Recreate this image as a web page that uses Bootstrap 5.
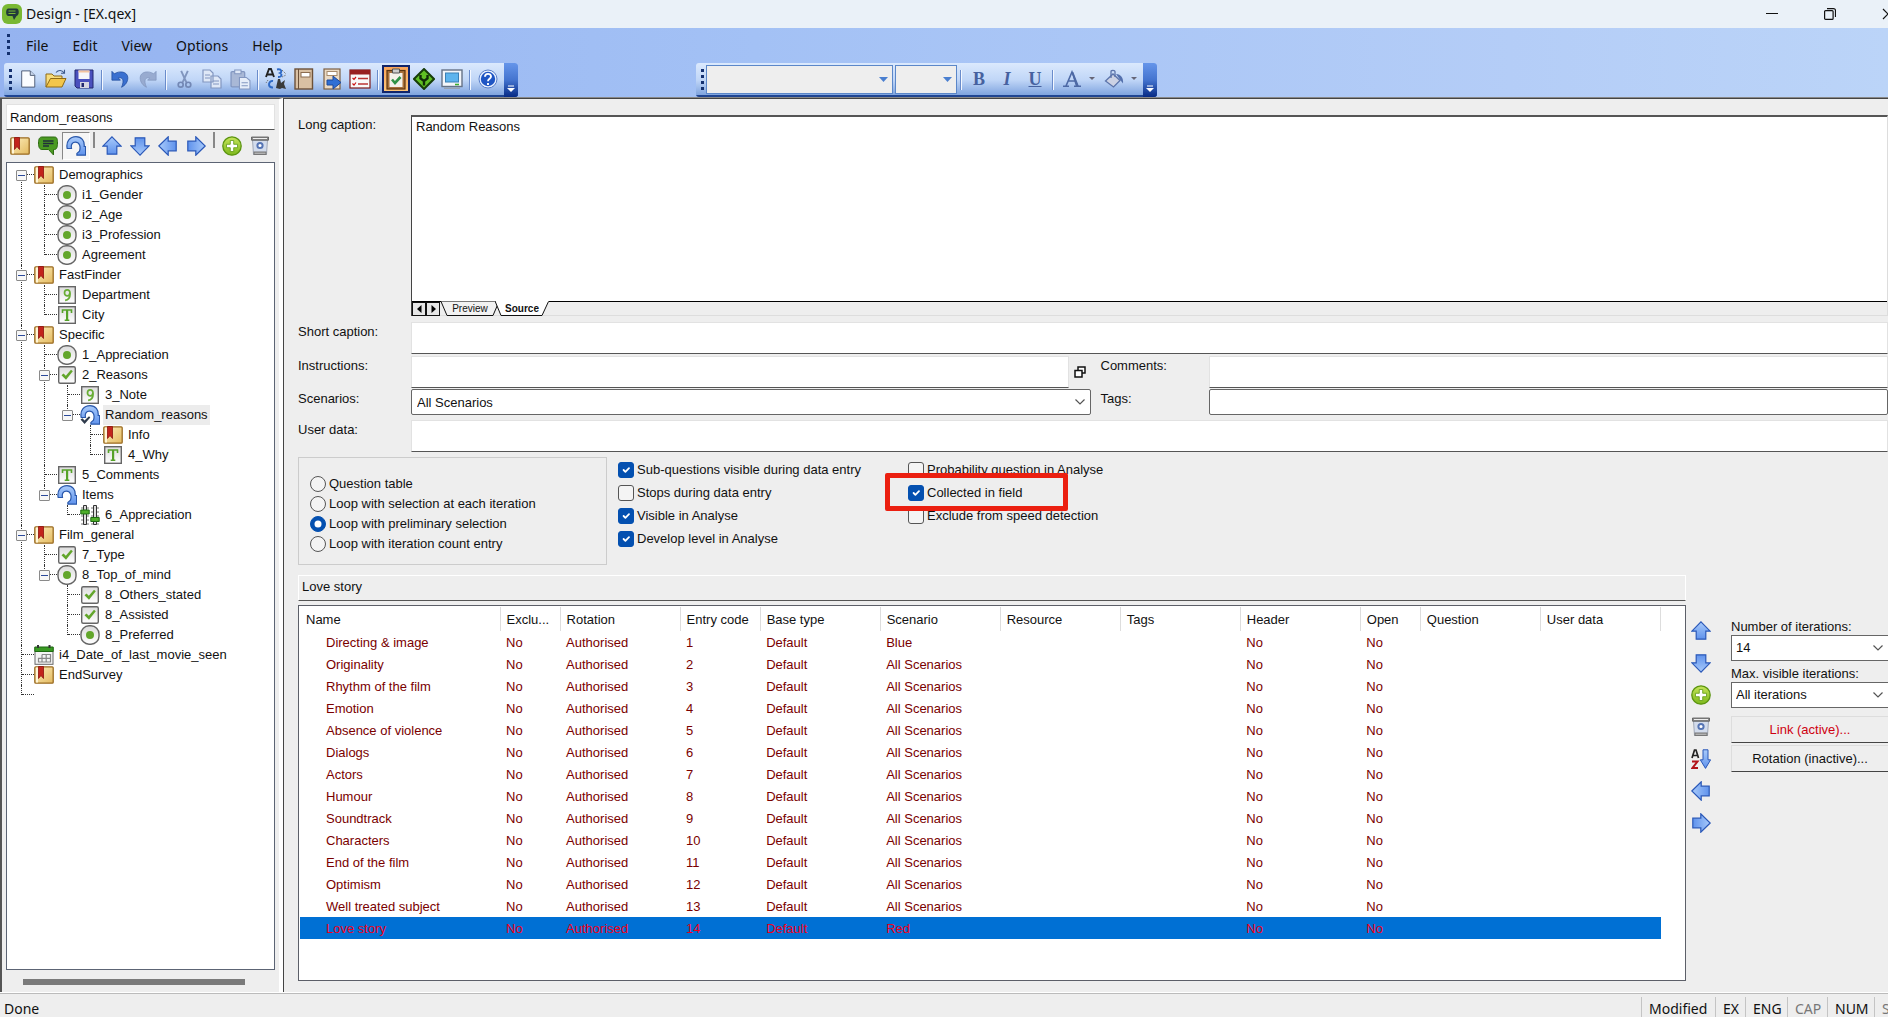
<!DOCTYPE html>
<html lang="en">
<head>
<meta charset="utf-8">
<meta name="viewport" content="width=device-width, initial-scale=1">
<title>Design - [EX.qex]</title>
<link href="https://cdn.jsdelivr.net/npm/bootstrap@5.3.0/dist/css/bootstrap.min.css" rel="stylesheet">
<style>
  body { font-family: "Liberation Sans", Arial, sans-serif; font-size: 13px; line-height: 16px; color: #111; background: #eee; }
  .ui-font { font-family: "Noto Sans", "Segoe UI", sans-serif; font-size: 14px; line-height: 20px; }
  svg { display: block; flex: none; }
  button { color: inherit; }
  .flat-btn { border: 0; background: none; padding: 0; display: flex; align-items: center; justify-content: center; flex: none; }

  /* title bar */
  .title-bar { height: 28px; background: #eaf1f8; padding-left: 2px; }
  .win-btns { margin-right: -29px; }
  .win-btns .flat-btn { width: 58px; height: 28px; }

  /* menu and toolbars */
  .bars { background: linear-gradient(90deg, #95b3f0, #a3c1f5 40%, #b4cdf7 80%, #bbd4f8); border-bottom: 1px solid #888; }
  .menu-bar { height: 35px; padding-left: 7px; }
  .menu-bar a { color: #111; text-decoration: none; padding: 0 12px; }
  .grip-dots { width: 3px; height: 23px; background: repeating-linear-gradient(#13306f 0 3px, transparent 3px 6px); flex: none; }
  .tool-strip { height: 34px; background: linear-gradient(#dbe9fd, #c0d6f7 50%, #7fa4df 94%, #1f4592 95%); border-radius: 3px; }
  .format-strip { margin-left: 178px; }
  .tool-strip .flat-btn { width: 28px; height: 28px; margin-bottom: 2px; }
  .tool-strip .flat-btn.with-arrow { width: 42px; gap: 7px; }
  .tool-strip .flat-btn.active-tool { background: linear-gradient(#f8a55b, #fcc67c); border: 2px solid #10246b; }
  .tool-sep { width: 8px; height: 20px; flex: none; background: linear-gradient(90deg, transparent 3px, #6a8ccb 3px 4px, #f4f8ff 4px 5px, transparent 5px); }
  .tool-strip .flat-btn.strip-end { width: 14px; height: 34px; margin: 0 0 0 2px; background: linear-gradient(#6595ea, #4474cf 50%, #062a85); border-radius: 0 3px 3px 0; padding-bottom: 5px; align-items: flex-end; }
  .strip-grip { width: 10px; padding-left: 5px; flex: none; }
  .bar-combo { appearance: none; display: block; height: 29px; border: 1px solid #5b87c9; border-radius: 0; background: #eee; opacity: 1; width: 100%; }
  .combo-wrap { position: relative; flex: none; margin-bottom: 2px; }
  .combo-wrap svg { position: absolute; right: 5px; top: 12px; }
  .combo-wide { width: 187px; }
  .combo-thin { width: 62px; margin-left: 2px; }
  .format-letter { font: bold 18px/20px "Liberation Serif", serif; color: #46619f; }

  /* left panel */
  .work-area { min-height: 0; }
  .side-panel { width: 283px; border-left: 2px solid #555; border-top: 1px solid #555; padding: 5px 4px 0 4px; border-right: 4px solid #fff; flex: none; }
  .line-input { width: 100%; background: #fff; border: 1px solid #e2e2e2; border-bottom: 1px solid #555; border-radius: 0; padding: 0 4px; color: #111; outline: 0; display: block; }
  .side-input { height: 26px; padding-left: 3px; }
  .side-tools { height: 32px; padding-left: 4px; }
  .side-tools .flat-btn { width: 28px; height: 28px; }
  .side-tools .flat-btn.pressed { border: 1px solid #888; border-right-color: #fff; border-bottom-color: #fff; background: #f6f6f6; }
  .side-tools .flat-btn:first-child { width: 20px; margin-right: 4px; }
  .side-sep { width: 2px; height: 16px; background: #888; margin: 2px 3px 0; flex: none; align-self: flex-start; }
  .tree-box { background: #fff; border: 1px solid #5c6474; padding: 2px 0 0 4px; flex: 1; overflow: hidden; min-height: 0; }
  .tree-list, .tree-list ul { list-style: none; margin: 0; padding: 0; }
  .tree-list ul { padding-left: 23px; }
  .tree-list li { position: relative; min-height: 20px; }
  .tree-list li::before { content: ""; position: absolute; left: 10px; top: 0; height: 100%; border-left: 1px dotted #333; }
  .tree-list li:last-child::before { height: 10px; }
  .tree-list > li:first-child::before { top: 10px; }
  .node { display: flex; align-items: center; height: 20px; position: relative; }
  .node::before { content: ""; position: absolute; left: 11px; top: 9px; width: 12px; border-top: 1px dotted #333; }
  .node > svg { position: relative; margin-left: 23px; }
  .node > .fold { position: relative; }
  .node > .fold + svg { margin-left: 7px; }
  .fold { width: 11px; height: 11px; margin-left: 5px; border: 1px solid #8a8a8a; border-radius: 1px; background: linear-gradient(#2b4a9b, #2b4a9b) center / 7px 1px no-repeat #f7f7f7; padding: 0; flex: none; }
  .node span { margin-left: 3px; padding: 2px; white-space: nowrap; }
  .node .picked { background: #ececec; }
  .h-scroll { height: 23px; padding: 9px 30px 0 17px; }
  .h-scroll div { height: 6px; background: #7a7a7a; }

  /* main form */
  .main-pane { border-left: 1px solid #444; border-top: 1px solid #444; padding: 16px 0 12px 14px; min-width: 0; }
  .form-line { display: flex; }
  .form-line > label { width: 113px; padding-top: 2px; flex: none; }
  .form-line .tail-label { width: 118px; padding: 2px 0 0 10px; }
  .half-line { flex: 1 1 0; min-width: 0; }
  .gap-short { margin-top: 6px; }
  .gap-instr { margin-top: 2px; }
  .gap-scen { margin-top: 1px; }
  .gap-user { margin-top: 5px; }
  .caption-box { border-left: 1px solid #444; border-top: 2px solid #555; flex: 1; border-right: 1px solid #ddd; }
  .caption-box textarea { display: block; width: 100%; height: 185px; border: 0; border-bottom: 1px solid #000; border-radius: 0; outline: 0; resize: none; padding: 2px 4px; color: #111; background: #fff; }
  .sheet-tabs { height: 14px; font-size: 10px; line-height: 14px; border-bottom: 1px solid #ddd; }
  .sheet-tabs .step { width: 14px; height: 14px; border: 1px solid #111; background: #e6e6e6; }
  .sheet-tab { border: 0; background: none; padding: 0; position: relative; height: 14px; text-align: center; font-size: 10px; line-height: 12px; }
  .sheet-tab svg { position: absolute; left: 0; top: -1px; }
  .sheet-tab span { position: relative; }
  .tab-off { width: 60px; }
  .tab-on { width: 54px; margin-left: -5px; font-weight: bold; }
  .line-input.tall { height: 32px; }
  .boxed { width: 100%; height: 26px; border: 1px solid #666; border-radius: 2px; background: #fff; padding: 0 6px; color: #111; outline: 0; display: block; }
  select.boxed { appearance: none; padding: 1px 0 0 5px; background: #fff url("data:image/svg+xml,%3Csvg xmlns='http://www.w3.org/2000/svg' width='10' height='6'%3E%3Cpath d='M.5.5 5 5 9.500.5' fill='none' stroke='%23555' stroke-width='1.200'/%3E%3C/svg%3E") no-repeat right 5px center; }
  .pop-btn { width: 22px; }

  .option-area { margin-top: 5px; height: 108px; }
  .radio-group { width: 309px; border: 1px solid #ccc; padding: 18px 0 0 11px; gap: 4px; }
  .option-line { display: flex; align-items: center; height: 16px; white-space: nowrap; }
  .option-line .form-check-input { width: 16px; height: 16px; margin: 0 3px 0 0; border: 1px solid #555; background-color: #f4f4f4; flex: none; box-shadow: none; }
  .option-line .form-check-input[type=checkbox] { border-radius: 3px; }
  .option-line .form-check-input:checked { background-color: #0450b0; border-color: #0450b0; }
  .option-line .form-check-input[type=checkbox]:checked { background-size: 12px 12px; }
  .check-col { gap: 7px; padding-top: 5px; width: 290px; position: relative; }
  .check-first { margin-left: 11px; }
  .red-frame { position: absolute; left: -23px; top: 16px; width: 183px; height: 38px; border: 5px solid #eb1f10; border-radius: 2px; pointer-events: none; }

  /* iteration list */
  .iter-area { margin-top: 10px; min-height: 0; }
  .iter-main { min-width: 0; }
  .name-field { height: 26px; background: #eee; border-color: #fff; border-bottom-color: #555; padding: 0 3px 3px; }
  .list-box { margin-top: 4px; background: #fff; border: 1px solid #5c5f68; padding: 1px; overflow: hidden; }
  .iter-table { table-layout: fixed; width: 1361px; border-collapse: collapse; }
  .iter-table th { height: 24px; font-weight: normal; padding: 4px 0 0 6px; border-right: 1px solid #ddd; overflow: hidden; white-space: nowrap; vertical-align: top; }
  .iter-table th, .iter-table td { line-height: 18px; }
  .iter-table td { height: 22px; padding: 3px 0 1px 6px; color: #7a0000; white-space: nowrap; }
  .iter-table td:first-child { padding-left: 26px; }
  .iter-table .chosen td { background: #0070d4; color: #f0001a; }
  .c-name { width: 200px; } .c-60 { width: 60px; } .c-80 { width: 80px; } .c-120 { width: 120px; }
  .move-tools { width: 20px; margin-left: 5px; padding-top: 46px; gap: 12px; flex: none; }
  .iter-side { width: 157px; margin-left: 20px; padding-top: 43px; flex: none; }
  .iter-side .boxed { margin-bottom: 4px; padding-left: 4px; padding-top: 0; border-right: 0; border-radius: 0; }
  .iter-side label { height: 17px; padding-top: 1px; white-space: nowrap; }
  .raised { height: 27px; width: 100%; background: #eee; border: 1px solid #ddd; border-bottom: 1px solid #444; border-right: 0; border-radius: 0; padding: 0; margin-top: 2px; }
  .raised.link-on { margin-top: 4px; color: #cf0010; }

  /* status bar */
  .status-bar { height: 24px; border-top: 1px solid #bbb; padding-left: 4px; overflow: hidden; box-shadow: 0 -1px #fff; position: relative; }
  .status-bar .cell { border-left: 1px solid #c4c4c4; padding: 2px 0 0 7px; flex: none; margin-top: 3px; height: 20px; }
  .status-bar .cell, .status-bar .msg { line-height: 20px; }
  .status-bar .msg { padding-top: 5px; }
  .w-mod { width: 74px; } .w-ex { width: 30px; } .w-eng { width: 42px; } .w-cap { width: 40px; } .w-num { width: 47px; } .w-scr { width: 14px; overflow: hidden; }
  .dim { color: #777; }
</style>
</head>
<body>
<svg width="0" height="0" class="position-absolute" aria-hidden="true">
  <defs>
    <linearGradient id="gBlue" x1="0" y1="0" x2="0" y2="1"><stop offset="0" stop-color="#a9cbfb"/><stop offset="1" stop-color="#5f92ec"/></linearGradient>
    <linearGradient id="gGold" x1="0" y1="0" x2="1" y2="1"><stop offset="0" stop-color="#fff0c0"/><stop offset="1" stop-color="#e2b95e"/></linearGradient>
    <linearGradient id="gGrey" x1="0" y1="0" x2="0" y2="1"><stop offset="0" stop-color="#dcdcdc"/><stop offset="1" stop-color="#fff"/></linearGradient>
    <linearGradient id="gLime" x1="0" y1="0" x2="0" y2="1"><stop offset="0" stop-color="#c5e45a"/><stop offset="1" stop-color="#7db81c"/></linearGradient>
  </defs>
  <symbol id="book" viewBox="0 0 20 20"><rect x=".8" y="1.800" width="18.400" height="16.400" rx="1" fill="url(#gGold)" stroke="#9a6b22" stroke-width="1.300"/><path d="M2 2.500h2v15H2z" fill="#fff5d6"/><path d="M4.500 1.500h5v12l-2.500-3-2.500 3z" fill="#c3241c" stroke="#8d120e" stroke-width=".8"/></symbol>
  <symbol id="radio" viewBox="0 0 20 20"><rect x="1" y=".8" width="18" height="18.400" rx="8" fill="url(#gGrey)" stroke="#666" stroke-width="1.400"/><circle cx="10" cy="10" r="4" fill="#62a62b"/></symbol>
  <symbol id="nine" viewBox="0 0 20 20"><rect x="1.700" y="1.700" width="16.600" height="16.600" fill="url(#gGrey)" stroke="#666" stroke-width="1.400"/><path d="M12.800 8c0 1.900-1.100 2.900-2.500 2.900S7.500 9.800 7.500 7.900 8.600 4.800 10.200 4.800s2.900 1.200 2.900 4.200c0 3.500-1.600 5.900-5 6.300" fill="none" stroke="#68ad35" stroke-width="1.700"/></symbol>
  <symbol id="tee" viewBox="0 0 20 20"><rect x="1.700" y="1.700" width="16.600" height="16.600" fill="url(#gGrey)" stroke="#666" stroke-width="1.400"/><path d="M5.500 8V5h9v3M10 5v10M7.700 15.200h4.600" fill="none" stroke="#56a22a" stroke-width="1.600"/><path d="M9 5h2.200v10H9z" fill="#56a22a"/></symbol>
  <symbol id="tick" viewBox="0 0 20 20"><rect x="1.700" y="1.700" width="16.600" height="16.600" rx="1.500" fill="url(#gGrey)" stroke="#666" stroke-width="1.400"/><path d="M4.500 10.200l2-1.700 2.300 2.300 5.200-6 1.800 1.400-6.800 8.600z" fill="#62a62b"/></symbol>
  <symbol id="loop" viewBox="0 0 20 20"><path d="M1.200 12.500C-.3 5.500 4 .7 10 .7c5.600 0 8.700 4 8.200 9.800h1.400v8.700h-8.700v-1.800l2.600-2.300c1.500-4.800-.2-8.900-4.100-8.900-3.200 0-4.700 2.500-3.900 6.300z" fill="url(#gBlue)" stroke="#2a58ab" stroke-width="1.200"/></symbol>
  <symbol id="looptick" viewBox="0 0 20 20"><use href="#loop"/><path d="M.5 14.500l2-1.200 2 2.200 4.500-4.300 1.300 1.300-5.700 6.500z" fill="#2f3b4c"/></symbol>
  <symbol id="slider" viewBox="0 0 20 20"><path d="M1 3h18M1 7h18M1 11h18M1 15h18M1 19h18" stroke="#777" stroke-width="1" stroke-dasharray="3 2"/><path d="M3.500.5h3v19h-3zM13.500.5h3v19h-3z" fill="#ddd" stroke="#333"/><path d="M.8 5h8.400v4H.8zM10.800 12.500h8.400v4h-8.400z" fill="#4fae2a" stroke="#1d6a10"/></symbol>
  <symbol id="cal" viewBox="0 0 20 20"><rect x="1" y="3" width="18" height="16.300" fill="#f4f4f4" stroke="#666"/><path d="M.8 2h18.400v4.500H.8z" fill="#3a9a24" stroke="#1d6a10"/><path d="M4 0v3M15.500 0v3" stroke="#333" stroke-width="2"/><path d="M8 9.500h8.500v7.500H4.500v-3.700H16.500M8 9.500V17M12.200 9.500V17" fill="none" stroke="#888" stroke-width="1.200"/></symbol>
  <symbol id="chat" viewBox="0 0 20 20"><path d="M4 1h12.500C19 1 19.500 3 19.500 7s-.8 6.500-3 6.500h-1V19l-5-5.500H4C1.500 13.500.5 11 .5 7S1.500 1 4 1z" fill="#4b9a22" stroke="#2e6b12"/><path d="M5 5h10.500M5 7.500h10.500M5 10h6" stroke="#20303a" stroke-width="1.400"/></symbol>
  <symbol id="up" viewBox="0 0 20 20"><path d="M10 .8l9.200 9.400h-4.400v8H5.200v-8H.8z" fill="url(#gBlue)" stroke="#2a58b8" stroke-width="1.200"/></symbol>
  <symbol id="plus" viewBox="0 0 20 20"><circle cx="10" cy="10" r="9.200" fill="url(#gLime)" stroke="#5b9410" stroke-width="1.300"/><path d="M8.300 4.500h3.400v3.800h3.800v3.400h-3.800v3.800H8.300v-3.800H4.500V8.300h3.800z" fill="#fff" stroke="#5f9a12" stroke-width=".8"/></symbol>
  <symbol id="bin" viewBox="0 0 20 20"><path d="M2.500 4h15l-1 14.500H3.500z" fill="#d3dcec" stroke="#8f98a8" stroke-width=".8"/><path d="M1.500 1h17v3.200h-17z" fill="#8a8a8a" stroke="#555" stroke-width=".8"/><path d="M3 2.500h14" stroke="#eee"/><path d="M3.500 15.500h13v3.500h-13z" fill="#777"/><path d="M4.500 17.200h11" stroke="#ccc"/><circle cx="10" cy="9.500" r="2.600" fill="#fff" stroke="#5574b4" stroke-width="2"/></symbol>
  <symbol id="sortaz" viewBox="0 0 20 20"><path d="M1 9L3.500 1h1.500L7.500 9M2 6.500h4.500" fill="none" stroke="#222" stroke-width="1.700"/><path d="M1 12.500h5.500L1.500 19H7" fill="none" stroke="#b3151a" stroke-width="2"/><path d="M12 .8h5v10h2.600L14.500 19.400 9.300 10.800H12z" fill="url(#gBlue)" stroke="#2a58b8"/></symbol>
  <symbol id="newdoc" viewBox="0 0 20 20"><path d="M3 1h9.500L17.500 6v13H3z" fill="#fbfcff" stroke="#46546e"/><path d="M12.500 1v5h5" fill="#c9d6ec" stroke="#46546e"/></symbol>
  <symbol id="opendoc" viewBox="0 0 22 20"><path d="M1 18V5h6l2 2h8v3" fill="#f6dc7c" stroke="#8f6a14"/><path d="M1 18L5.500 9.500H21L17 18z" fill="#f3c64a" stroke="#8f6a14"/><path d="M11 3.500c2.500-3 6-2.500 8 .3M19.500.8v3.500h-3.500" fill="none" stroke="#3d5a8a" stroke-width="1.100"/></symbol>
  <symbol id="savedoc" viewBox="0 0 20 20"><path d="M1 1h18v18H3l-2-2z" fill="#4a50bd" stroke="#23286f"/><path d="M4.500 1.500h11v8.500h-11z" fill="#f6f6fa"/><path d="M6 13h9v6H6z" fill="#d6d6e2"/><path d="M7.500 14h2.500v4H7.500z" fill="#23286f"/><path d="M4.500 1.500h11v2h-11z" fill="#f3c3a0"/></symbol>
  <symbol id="undo" viewBox="0 0 20 20"><path d="M1 1.500l2.800 2.800C9 .5 18.500 1.500 18.700 8.500c.1 5-3 8.500-7 10.700 2-4 3.500-12-3.700-10.400l2.500 2.500H1z" fill="#3a70d0" stroke="#1c4798" stroke-width=".8"/></symbol>
  <symbol id="redo" viewBox="0 0 20 20"><path d="M19 1.500l-2.800 2.800C11 .5 1.500 1.500 1.300 8.500c-.1 5 3 8.500 7 10.700-2-4-3.500-12 3.700-10.400l-2.500 2.500H19z" fill="#98abd0" stroke="#8095be" stroke-width=".8"/></symbol>
  <symbol id="cut" viewBox="0 0 20 20"><path d="M6.500 1l5.500 12M13.500 1L8 13" stroke="#8095be" stroke-width="2"/><circle cx="6" cy="15.500" r="2.600" fill="none" stroke="#7388b5" stroke-width="1.800"/><circle cx="14" cy="15.500" r="2.600" fill="none" stroke="#7388b5" stroke-width="1.800"/></symbol>
  <symbol id="copy" viewBox="0 0 20 20"><path d="M1 1h7l3 3v9H1zM9 7h7l3 3v9H9z" fill="#dfe8f7" stroke="#8296c0" stroke-width="1.200"/><path d="M3 6h5M3 9h5M11 12h6M11 15h6" stroke="#8296c0"/></symbol>
  <symbol id="paste" viewBox="0 0 20 20"><rect x="1" y="2.500" width="13" height="14.500" rx="1" fill="#a9b8d6" stroke="#8296c0" stroke-width="1.200"/><path d="M4.500 1h6v3.500h-6z" fill="#dfe8f7" stroke="#8296c0"/><path d="M9 8h6.500L19 11v8H9z" fill="#e6edf9" stroke="#8296c0"/><path d="M11 13h6M11 16h6" stroke="#8296c0"/></symbol>
  <symbol id="letters" viewBox="0 0 22 22"><path d="M1 9L4 1h2l3 8M2.500 6.500h5" fill="none" stroke="#222" stroke-width="1.900"/><path d="M12 1.500c5-1 5 2.500 3 3.500 2 1 2.500 4-2 4" fill="none" stroke="#2d69c6" stroke-width="1.900"/><path d="M8 13c-4-1-6 6-1 6.500h1" fill="none" stroke="#2d69c6" stroke-width="2"/><path d="M11 20l2-9h2l1 4 4-3-1 4 2 5-4-1-2 1z" fill="#3a3a3a"/><path d="M17 2l4 4M17 9l4-2M3 12l-2 3" stroke="#777" stroke-dasharray="1.500 1"/></symbol>
  <symbol id="notebook" viewBox="0 0 20 22"><rect x="1" y="1" width="17.500" height="20" fill="#d9c0a3" stroke="#6c5139" stroke-width="1.400"/><path d="M4.500 1v20" stroke="#6c5139"/><rect x="7" y="4.500" width="9" height="4.500" fill="#fff" stroke="#8b6c50"/></symbol>
  <symbol id="exportdoc" viewBox="0 0 20 22"><rect x="2" y="1" width="16" height="20" fill="#eadac5" stroke="#7c6044" stroke-width="1.200"/><rect x="5" y="3.500" width="10" height="4" fill="#fff" stroke="#a68a6b"/><path d="M5 12h6V8l8 6.500-8 6.500v-4H5z" fill="#2f6fd4" stroke="#1c489a"/></symbol>
  <symbol id="redlist" viewBox="0 0 22 20"><rect x="1" y="1" width="20" height="18" fill="#f8f8f8" stroke="#7d1a1a" stroke-width="1.200"/><path d="M1 1h20v4.500H1z" fill="#982020"/><path d="M9 9.500h10M9 15h10" stroke="#b33" stroke-width="1.400"/><path d="M3.500 9l1.500 1.300L7 8M3.500 14.500L5 16l2-2.500" fill="none" stroke="#c11" stroke-width="1.200"/></symbol>
  <symbol id="clip" viewBox="0 0 20 22"><rect x="1" y="2.500" width="18" height="18.500" fill="#a8703a" stroke="#5c3510" stroke-width="1.200"/><path d="M3.500 5h13v14h-13z" fill="#f4f1ea"/><path d="M6.500 1h7v4h-7z" fill="#ccc" stroke="#555"/><path d="M6 11.500l3 3.500 5.500-6" fill="none" stroke="#2f9346" stroke-width="2.600"/></symbol>
  <symbol id="diamond" viewBox="0 0 22 22"><path d="M11 1l10 10-10 10L1 11z" fill="#5fbf23" stroke="#173d0a" stroke-width="2"/><path d="M7.500 7v3.500L11 13l3.500-2.500V7M11 13v4.500" fill="none" stroke="#112c08" stroke-width="2.400"/></symbol>
  <symbol id="monitor" viewBox="0 0 22 20"><rect x="1" y="1" width="20" height="16.500" fill="#f3f6fb" stroke="#657287" stroke-width="1.400"/><rect x="4.500" y="4" width="13" height="9" fill="#5db4ee" stroke="#3a80b6"/><path d="M14 15.500h4" stroke="#3cae30" stroke-width="1.600"/><path d="M3 19.200h16" stroke="#999"/></symbol>
  <symbol id="helpball" viewBox="0 0 20 20"><circle cx="10" cy="10" r="9" fill="#e9f1ff" stroke="#5a7fc9"/><circle cx="10" cy="10" r="7.200" fill="#1f56c4"/><path d="M7 7.800C7 4 13 4 13 7.600c0 2.200-3 2.100-3 4.600M10 14v2" fill="none" stroke="#fff" stroke-width="1.900"/></symbol>
  <symbol id="bucket" viewBox="0 0 20 20"><path d="M1.500 12L9 5l7 6.500L9.500 18z" fill="#ccd2e4" stroke="#5c74aa" stroke-width="1.300"/><path d="M7 9V2.500C7 1 11 1 11 2.500V8" fill="none" stroke="#5c74aa" stroke-width="1.300"/><path d="M12 5c5 .5 7.500 3.500 7 9.500L15.500 10z" fill="#5470ad"/></symbol>
  <symbol id="fontA" viewBox="0 0 20 18"><path d="M1 16.200h6M12 16.200h7M4 16L10 2l5.500 14M6.500 11h7" fill="none" stroke="#4d69a5" stroke-width="1.600"/><path d="M9.500 2h1.800l5.500 14h-3z" fill="#4d69a5"/></symbol>
</svg>

<div class="d-flex flex-column vh-100 overflow-hidden">
  <header class="flex-shrink-0">
    <div class="title-bar ui-font d-flex align-items-center justify-content-between overflow-hidden">
      <div class="d-flex align-items-center gap-1">
        <svg width="20" height="20" viewBox="0 0 20 20"><rect width="20" height="20" rx="6" fill="#79b833"/><path d="M6 4.500h8.500c3 0 3 7 0 7.500L12 16l-1.500-4H6c-2.500-.5-2.500-7 0-7.500z" fill="#223a3a"/><path d="M6.500 7h7M6.500 9.500h7" stroke="#79b833"/></svg>
        <span>Design - [EX.qex]</span>
      </div>
      <div class="win-btns d-flex">
        <button class="flat-btn" aria-label="Minimise"><svg width="12" height="12"><path d="M0 5.500h12" stroke="#111"/></svg></button>
        <button class="flat-btn" aria-label="Restore"><svg width="12" height="12" fill="none" stroke="#111" stroke-width="1.200"><rect x=".6" y="2.600" width="8.500" height="8.800" rx="1"/><path d="M3 .6h6.500q2 0 2 2v6.500"/></svg></button>
        <button class="flat-btn" aria-label="Close"><svg width="12" height="12"><path d="M1 1l10 10M11 1L1 11" stroke="#111" stroke-width="1.200"/></svg></button>
      </div>
    </div>
    <div class="bars">
      <nav class="menu-bar ui-font d-flex align-items-center">
        <div class="grip-dots me-1"></div>
        <a href="#">File</a><a href="#">Edit</a><a href="#">View</a><a href="#">Options</a><a href="#">Help</a>
      </nav>
      <div class="d-flex">
        <div class="tool-strip d-flex align-items-center ms-1">
          <div class="strip-grip"><div class="grip-dots"></div></div>
          <button class="flat-btn" aria-label="New"><svg width="18" height="20"><use href="#newdoc"/></svg></button>
          <button class="flat-btn" aria-label="Open"><svg width="22" height="20"><use href="#opendoc"/></svg></button>
          <button class="flat-btn" aria-label="Save"><svg width="20" height="20"><use href="#savedoc"/></svg></button>
          <div class="tool-sep"></div>
          <button class="flat-btn" aria-label="Undo"><svg width="18" height="18"><use href="#undo"/></svg></button>
          <button class="flat-btn" aria-label="Redo"><svg width="18" height="18"><use href="#redo"/></svg></button>
          <div class="tool-sep"></div>
          <button class="flat-btn" aria-label="Cut"><svg width="19" height="19"><use href="#cut"/></svg></button>
          <button class="flat-btn" aria-label="Copy"><svg width="20" height="20"><use href="#copy"/></svg></button>
          <button class="flat-btn" aria-label="Paste"><svg width="21" height="21"><use href="#paste"/></svg></button>
          <div class="tool-sep"></div>
          <button class="flat-btn" aria-label="Languages"><svg width="22" height="22"><use href="#letters"/></svg></button>
          <button class="flat-btn" aria-label="Notebook"><svg width="20" height="22"><use href="#notebook"/></svg></button>
          <button class="flat-btn" aria-label="Export"><svg width="20" height="22"><use href="#exportdoc"/></svg></button>
          <button class="flat-btn" aria-label="Checks"><svg width="22" height="20"><use href="#redlist"/></svg></button>
          <div class="tool-sep"></div>
          <button class="flat-btn active-tool" aria-label="Questionnaire"><svg width="20" height="22"><use href="#clip"/></svg></button>
          <button class="flat-btn" aria-label="Routing"><svg width="22" height="22"><use href="#diamond"/></svg></button>
          <button class="flat-btn" aria-label="Screen"><svg width="22" height="20"><use href="#monitor"/></svg></button>
          <div class="tool-sep"></div>
          <button class="flat-btn" aria-label="Help"><svg width="20" height="20"><use href="#helpball"/></svg></button>
          <button class="flat-btn strip-end" aria-label="More tools"><svg width="8" height="7"><path d="M1 1h6" stroke="#fff"/><path d="M0 3h8L4 7z" fill="#fff"/></svg></button>
        </div>
        <div class="tool-strip format-strip d-flex align-items-center">
          <div class="strip-grip"><div class="grip-dots"></div></div>
          <div class="combo-wrap combo-wide"><select class="bar-combo" aria-label="Font" disabled></select><svg width="9" height="5"><path d="M0 0h9L4.500 5z" fill="#4a7fd0"/></svg></div>
          <div class="combo-wrap combo-thin"><select class="bar-combo" aria-label="Size" disabled></select><svg width="9" height="5"><path d="M0 0h9L4.500 5z" fill="#4a7fd0"/></svg></div>
          <div class="tool-sep"></div>
          <button class="flat-btn format-letter">B</button>
          <button class="flat-btn format-letter fst-italic">I</button>
          <button class="flat-btn format-letter text-decoration-underline">U</button>
          <div class="tool-sep"></div>
          <button class="flat-btn with-arrow" aria-label="Text colour"><svg width="20" height="18"><use href="#fontA"/></svg><svg width="6" height="4"><path d="M0 0h6L3 3z" fill="#667"/></svg></button>
          <button class="flat-btn with-arrow" aria-label="Fill colour"><svg width="20" height="20"><use href="#bucket"/></svg><svg width="6" height="4"><path d="M0 0h6L3 3z" fill="#667"/></svg></button>
          <button class="flat-btn strip-end" aria-label="More formats"><svg width="8" height="7"><path d="M1 1h6" stroke="#fff"/><path d="M0 3h8L4 7z" fill="#fff"/></svg></button>
        </div>
      </div>
    </div>
  </header>

  <div class="work-area d-flex flex-grow-1">
    <aside class="side-panel d-flex flex-column">
      <input class="line-input side-input flex-shrink-0" value="Random_reasons" aria-label="Item name">
      <div class="side-tools d-flex align-items-center flex-shrink-0">
        <button class="flat-btn" aria-label="Chapter"><svg width="20" height="20"><use href="#book"/></svg></button>
        <button class="flat-btn" aria-label="Question"><svg width="20" height="20"><use href="#chat"/></svg></button>
        <button class="flat-btn pressed" aria-label="Loop"><svg width="20" height="20"><use href="#loop"/></svg></button>
        <div class="side-sep"></div>
        <button class="flat-btn" aria-label="Move up"><svg width="20" height="20"><use href="#up"/></svg></button>
        <button class="flat-btn" aria-label="Move down"><svg width="20" height="20" viewBox="0 0 20 20"><use href="#up" width="20" height="20" transform="rotate(180 10 10)"/></svg></button>
        <button class="flat-btn" aria-label="Move left"><svg width="20" height="20" viewBox="0 0 20 20"><use href="#up" width="20" height="20" transform="rotate(-90 10 10)"/></svg></button>
        <button class="flat-btn" aria-label="Move right"><svg width="20" height="20" viewBox="0 0 20 20"><use href="#up" width="20" height="20" transform="rotate(90 10 10)"/></svg></button>
        <div class="side-sep"></div>
        <button class="flat-btn" aria-label="Add"><svg width="20" height="20"><use href="#plus"/></svg></button>
        <button class="flat-btn" aria-label="Delete"><svg width="20" height="20"><use href="#bin"/></svg></button>
      </div>
      <div class="tree-box">
        <ul class="tree-list">
          <li><div class="node"><button class="fold" aria-label="Collapse"></button><svg width="20" height="20"><use href="#book"/></svg><span>Demographics</span></div>
            <ul>
              <li><div class="node"><svg width="20" height="20"><use href="#radio"/></svg><span>i1_Gender</span></div></li>
              <li><div class="node"><svg width="20" height="20"><use href="#radio"/></svg><span>i2_Age</span></div></li>
              <li><div class="node"><svg width="20" height="20"><use href="#radio"/></svg><span>i3_Profession</span></div></li>
              <li><div class="node"><svg width="20" height="20"><use href="#radio"/></svg><span>Agreement</span></div></li>
            </ul></li>
          <li><div class="node"><button class="fold" aria-label="Collapse"></button><svg width="20" height="20"><use href="#book"/></svg><span>FastFinder</span></div>
            <ul>
              <li><div class="node"><svg width="20" height="20"><use href="#nine"/></svg><span>Department</span></div></li>
              <li><div class="node"><svg width="20" height="20"><use href="#tee"/></svg><span>City</span></div></li>
            </ul></li>
          <li><div class="node"><button class="fold" aria-label="Collapse"></button><svg width="20" height="20"><use href="#book"/></svg><span>Specific</span></div>
            <ul>
              <li><div class="node"><svg width="20" height="20"><use href="#radio"/></svg><span>1_Appreciation</span></div></li>
              <li><div class="node"><button class="fold" aria-label="Collapse"></button><svg width="20" height="20"><use href="#tick"/></svg><span>2_Reasons</span></div>
                <ul>
                  <li><div class="node"><svg width="20" height="20"><use href="#nine"/></svg><span>3_Note</span></div></li>
                  <li><div class="node"><button class="fold" aria-label="Collapse"></button><svg width="20" height="20"><use href="#looptick"/></svg><span class="picked">Random_reasons</span></div>
                    <ul>
                      <li><div class="node"><svg width="20" height="20"><use href="#book"/></svg><span>Info</span></div></li>
                      <li><div class="node"><svg width="20" height="20"><use href="#tee"/></svg><span>4_Why</span></div></li>
                    </ul></li>
                </ul></li>
              <li><div class="node"><svg width="20" height="20"><use href="#tee"/></svg><span>5_Comments</span></div></li>
              <li><div class="node"><button class="fold" aria-label="Collapse"></button><svg width="20" height="20"><use href="#loop"/></svg><span>Items</span></div>
                <ul>
                  <li><div class="node"><svg width="20" height="20"><use href="#slider"/></svg><span>6_Appreciation</span></div></li>
                </ul></li>
            </ul></li>
          <li><div class="node"><button class="fold" aria-label="Collapse"></button><svg width="20" height="20"><use href="#book"/></svg><span>Film_general</span></div>
            <ul>
              <li><div class="node"><svg width="20" height="20"><use href="#tick"/></svg><span>7_Type</span></div></li>
              <li><div class="node"><button class="fold" aria-label="Collapse"></button><svg width="20" height="20"><use href="#radio"/></svg><span>8_Top_of_mind</span></div>
                <ul>
                  <li><div class="node"><svg width="20" height="20"><use href="#tick"/></svg><span>8_Others_stated</span></div></li>
                  <li><div class="node"><svg width="20" height="20"><use href="#tick"/></svg><span>8_Assisted</span></div></li>
                  <li><div class="node"><svg width="20" height="20"><use href="#radio"/></svg><span>8_Preferred</span></div></li>
                </ul></li>
            </ul></li>
          <li><div class="node"><svg width="20" height="20"><use href="#cal"/></svg><span>i4_Date_of_last_movie_seen</span></div></li>
          <li><div class="node"><svg width="20" height="20"><use href="#book"/></svg><span>EndSurvey</span></div></li>
          <li><div class="node"></div></li>
        </ul>
      </div>
      <div class="h-scroll flex-shrink-0"><div></div></div>
    </aside>

    <main class="main-pane d-flex flex-column flex-grow-1">
      <div class="form-line">
        <label for="longCap">Long caption:</label>
        <div class="caption-box">
          <textarea id="longCap">Random Reasons</textarea>
          <div class="sheet-tabs d-flex">
            <button class="flat-btn step" aria-label="Previous tab"><svg width="5" height="8"><path d="M4.500 0v8L0 4z" fill="#000"/></svg></button>
            <button class="flat-btn step" aria-label="Next tab"><svg width="5" height="8"><path d="M.5 0v8L5 4z" fill="#000"/></svg></button>
            <button class="sheet-tab tab-off"><svg width="60" height="15"><path d="M1 .5L7 14.500H53L59 .5" fill="#f2f2f2" stroke="#111"/></svg><span>Preview</span></button>
            <button class="sheet-tab tab-on"><svg width="54" height="15"><path d="M0 0L6 14.500H47L54 0z" fill="#fff"/><path d="M0 0L6 14.500H47L53.500 .5" fill="none" stroke="#111"/></svg><span>Source</span></button>
          </div>
        </div>
      </div>
      <div class="form-line gap-short">
        <label for="shortCap">Short caption:</label>
        <div class="flex-grow-1"><input id="shortCap" class="line-input tall"></div>
      </div>
      <div class="form-line gap-instr">
        <label for="instr">Instructions:</label>
        <div class="half-line d-flex">
          <input id="instr" class="line-input tall">
          <button class="flat-btn pop-btn" aria-label="Open editor"><svg width="12" height="12" fill="#fff" stroke="#111" stroke-width="1.500"><rect x="4" y="1" width="7" height="6"/><rect x="1" y="4.500" width="7" height="6.500"/></svg></button>
        </div>
        <label class="tail-label" for="comm">Comments:</label>
        <div class="half-line"><input id="comm" class="line-input tall"></div>
      </div>
      <div class="form-line gap-scen">
        <label for="scen">Scenarios:</label>
        <div class="half-line"><select id="scen" class="boxed"><option>All Scenarios</option></select></div>
        <label class="tail-label" for="tags">Tags:</label>
        <div class="half-line"><input id="tags" class="boxed"></div>
      </div>
      <div class="form-line gap-user">
        <label for="udata">User data:</label>
        <div class="flex-grow-1"><input id="udata" class="line-input tall"></div>
      </div>

      <div class="option-area d-flex flex-shrink-0">
        <div class="radio-group d-flex flex-column">
          <label class="option-line"><input class="form-check-input" type="radio" name="mode">Question table</label>
          <label class="option-line"><input class="form-check-input" type="radio" name="mode">Loop with selection at each iteration</label>
          <label class="option-line"><input class="form-check-input" type="radio" name="mode" checked>Loop with preliminary selection</label>
          <label class="option-line"><input class="form-check-input" type="radio" name="mode">Loop with iteration count entry</label>
        </div>
        <div class="check-col check-first d-flex flex-column">
          <label class="option-line"><input class="form-check-input" type="checkbox" checked>Sub-questions visible during data entry</label>
          <label class="option-line"><input class="form-check-input" type="checkbox">Stops during data entry</label>
          <label class="option-line"><input class="form-check-input" type="checkbox" checked>Visible in Analyse</label>
          <label class="option-line"><input class="form-check-input" type="checkbox" checked>Develop level in Analyse</label>
        </div>
        <div class="check-col d-flex flex-column">
          <label class="option-line"><input class="form-check-input" type="checkbox">Probability question in Analyse</label>
          <label class="option-line"><input class="form-check-input" type="checkbox" checked>Collected in field</label>
          <label class="option-line"><input class="form-check-input" type="checkbox">Exclude from speed detection</label>
          <div class="red-frame"></div>
        </div>
      </div>

      <div class="iter-area d-flex flex-grow-1">
        <div class="iter-main d-flex flex-column flex-grow-1">
          <input class="line-input name-field flex-shrink-0" value="Love story" aria-label="Iteration name">
          <div class="list-box flex-grow-1">
            <table class="iter-table">
              <colgroup><col class="c-name"><col class="c-60"><col class="c-120"><col class="c-80"><col class="c-120"><col class="c-120"><col class="c-120"><col class="c-120"><col class="c-120"><col class="c-60"><col class="c-120"><col class="c-120"></colgroup>
              <thead><tr><th>Name</th><th>Exclu...</th><th>Rotation</th><th>Entry code</th><th>Base type</th><th>Scenario</th><th>Resource</th><th>Tags</th><th>Header</th><th>Open</th><th>Question</th><th>User data</th></tr></thead>
              <tbody id="iterRows"></tbody>
            </table>
          </div>
        </div>
        <div class="move-tools d-flex flex-column">
          <button class="flat-btn" aria-label="Move up"><svg width="20" height="20"><use href="#up"/></svg></button>
          <button class="flat-btn" aria-label="Move down"><svg width="20" height="20" viewBox="0 0 20 20"><use href="#up" width="20" height="20" transform="rotate(180 10 10)"/></svg></button>
          <button class="flat-btn" aria-label="Add"><svg width="20" height="20"><use href="#plus"/></svg></button>
          <button class="flat-btn" aria-label="Delete"><svg width="20" height="20"><use href="#bin"/></svg></button>
          <button class="flat-btn" aria-label="Sort"><svg width="20" height="20"><use href="#sortaz"/></svg></button>
          <button class="flat-btn" aria-label="Move left"><svg width="20" height="20" viewBox="0 0 20 20"><use href="#up" width="20" height="20" transform="rotate(-90 10 10)"/></svg></button>
          <button class="flat-btn" aria-label="Move right"><svg width="20" height="20" viewBox="0 0 20 20"><use href="#up" width="20" height="20" transform="rotate(90 10 10)"/></svg></button>
        </div>
        <div class="iter-side d-flex flex-column">
          <label for="numIt">Number of iterations:</label>
          <select id="numIt" class="boxed"><option>14</option></select>
          <label for="maxIt">Max. visible iterations:</label>
          <select id="maxIt" class="boxed"><option>All iterations</option></select>
          <button class="raised link-on">Link (active)...</button>
          <button class="raised">Rotation (inactive)...</button>
        </div>
      </div>
    </main>
  </div>

  <footer class="status-bar ui-font d-flex flex-shrink-0">
    <div class="msg flex-grow-1">Done</div>
    <div class="cell w-mod">Modified</div><div class="cell w-ex">EX</div><div class="cell w-eng">ENG</div><div class="cell w-cap dim">CAP</div><div class="cell w-num">NUM</div><div class="cell w-scr dim">SCRL</div>
  </footer>
</div>

<script src="https://cdn.jsdelivr.net/npm/bootstrap@5.3.0/dist/js/bootstrap.bundle.min.js"></script>
<script>
  const names = ["Directing & image", "Originality", "Rhythm of the film", "Emotion", "Absence of violence", "Dialogs", "Actors", "Humour", "Soundtrack", "Characters", "End of the film", "Optimism", "Well treated subject", "Love story"];
  const scenarios = { "Directing & image": "Blue", "Love story": "Red" };
  const body = document.getElementById("iterRows");
  names.forEach((name, i) => {
    const row = body.insertRow();
    if (name === "Love story") row.className = "chosen";
    [name, "No", "Authorised", i + 1, "Default", scenarios[name] || "All Scenarios", "", "", "No", "No", "", ""]
      .forEach(v => { row.insertCell().textContent = v; });
  });
</script>
</body>
</html>
